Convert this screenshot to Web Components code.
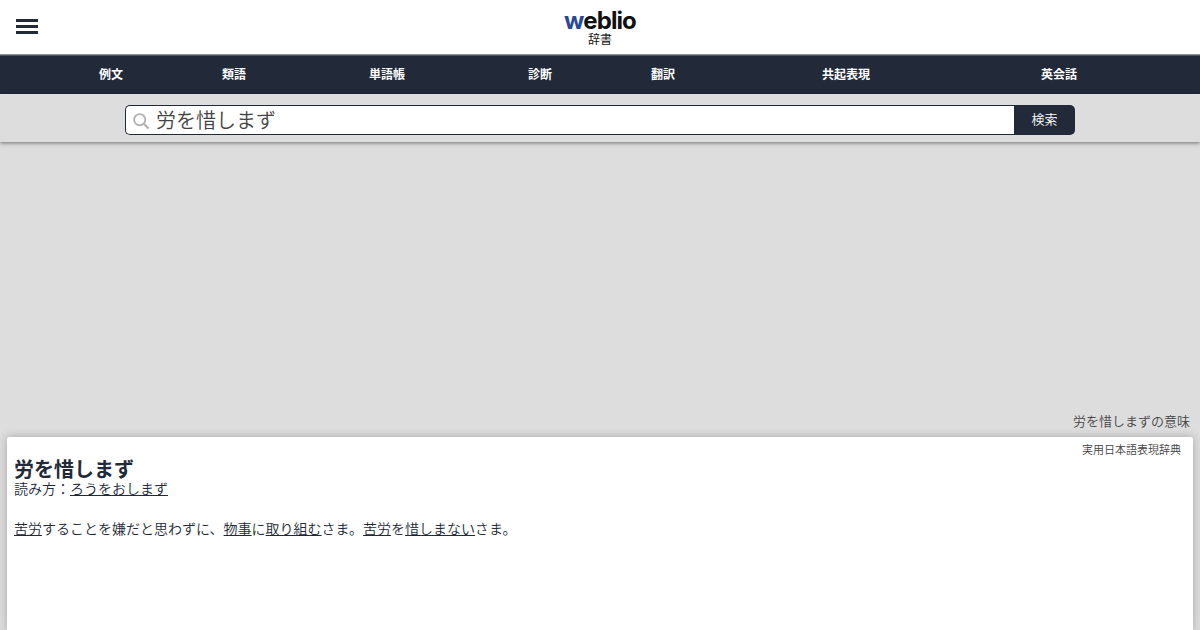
<!DOCTYPE html>
<html lang="ja">
<head>
<meta charset="utf-8">
<title>労を惜しまずの意味</title>
<style>
    body {
        margin: 0;
        height: 630px;
        overflow: hidden;
        display: flex;
        flex-direction: column;
        background: #ddd;
        color: #222939;
        font-family: "Liberation Sans", "Noto Sans CJK JP", sans-serif;
        font-weight: 350;
    }
</style>
</head>
<body>
<site-header></site-header>
<site-nav>
    <nav-item>例文</nav-item>
    <nav-item>類語</nav-item>
    <nav-item>単語帳</nav-item>
    <nav-item>診断</nav-item>
    <nav-item>翻訳</nav-item>
    <nav-item>共起表現</nav-item>
    <nav-item>英会話</nav-item>
</site-nav>
<search-bar word="労を惜しまず"></search-bar>
<page-caption>労を惜しまずの意味</page-caption>
<dict-entry>
    <span slot="source">実用日本語表現辞典</span>
    <span slot="title">労を惜しまず</span>
    <span slot="reading">読み方：<word-link>ろうをおしまず</word-link></span>
    <word-link>苦労</word-link>することを嫌だと思わずに、<word-link>物事</word-link>に<word-link>取り組む</word-link>さま。<word-link>苦労</word-link>を<word-link>惜しまない</word-link>さま。
</dict-entry>

<script>
function attach(el, html) {
    // trimmed, so that inline elements get no spaces around their slot
    el.attachShadow({ mode: 'open' }).innerHTML = html.trim();
}

class SiteHeader extends HTMLElement {
    constructor() {
        super();
        attach(this, `
            <style>
                :host {
                    flex: none;
                    display: grid;
                    grid-template-columns: 60px 1fr 60px;
                    height: 54px;
                    background: #fff;
                }
                .menu {
                    display: flex;
                    flex-direction: column;
                    gap: 3px;
                    width: 22px;
                    padding: 19px 0 0 16px;
                }
                .menu i {
                    height: 3px;
                    background: #222939;
                }
                .logo {
                    padding-top: 8px;
                    text-align: center;
                    color: #111;
                }
                .name {
                    font-family: Inter, "Liberation Sans", sans-serif;
                    font-size: 24px;
                    font-weight: 700;
                    line-height: 25px;
                    letter-spacing: -0.9px;
                }
                .name b {
                    font-weight: inherit;
                    color: #27489b;
                }
                .sub {
                    font-size: 12px;
                    font-weight: 400;
                    line-height: 14px;
                }
            </style>
            <div class="menu"><i></i><i></i><i></i></div>
            <div class="logo">
                <div class="name"><b>w</b>eblio</div>
                <div class="sub">辞書</div>
            </div>
        `);
    }
}

class SiteNav extends HTMLElement {
    constructor() {
        super();
        attach(this, `
            <style>
                :host {
                    flex: none;
                    box-sizing: border-box;
                    display: grid;
                    grid-template-columns: 123fr 123fr 183fr 123fr 123fr 243fr 183fr;
                    height: 40px;
                    padding: 0 49.5px;
                    background: linear-gradient(#8d9099 0, #8d9099 1px, #50545f 1px, #50545f 2px, #222939 2px);
                }
            </style>
            <slot></slot>
        `);
    }
}

class NavItem extends HTMLElement {
    constructor() {
        super();
        attach(this, `
            <style>
                :host {
                    display: block;
                    text-align: center;
                    font-size: 12px;
                    font-weight: bold;
                    line-height: 42px;
                    color: #fff;
                }
            </style>
            <slot></slot>
        `);
    }
}

class SearchBar extends HTMLElement {
    constructor() {
        super();
        attach(this, `
            <style>
                :host {
                    flex: none;
                    box-sizing: border-box;
                    display: flex;
                    justify-content: center;
                    height: 48px;
                    padding-top: 11px;
                    background: #ddd;
                    box-shadow: 0 1px 4px rgba(0, 0, 0, 0.5);
                }
                .field {
                    box-sizing: border-box;
                    display: flex;
                    align-items: center;
                    width: 889px;
                    height: 30px;
                    padding-left: 7px;
                    border: 1px solid #222939;
                    border-right: 0;
                    border-radius: 5px 0 0 5px;
                    background: #fff;
                    color: #444;
                    font-size: 20px;
                    line-height: 28px;
                }
                svg {
                    margin: 3px 6px 0 0;
                }
                .word {
                    padding-top: 2px;
                }
                .button {
                    width: 61px;
                    height: 30px;
                    border-radius: 0 5px 5px 0;
                    background: #222939;
                    color: #fff;
                    font-size: 13px;
                    line-height: 30px;
                    text-align: center;
                }
            </style>
            <div class="field">
                <svg width="17" height="17" viewBox="0 0 17 17" fill="none" stroke="#b3b3b3">
                    <circle cx="6.7" cy="6.7" r="5.6" stroke-width="1.9"/>
                    <path d="M10.8 10.8L15.5 15.5" stroke-width="2.3"/>
                </svg>
                <span class="word"></span>
            </div>
            <div class="button">検索</div>
        `);
        this.$word = this.shadowRoot.querySelector('.word');
    }

    static get observedAttributes() {
        return ['word'];
    }

    attributeChangedCallback(name, oldValue, newValue) {
        this.$word.textContent = newValue;
    }
}

class PageCaption extends HTMLElement {
    constructor() {
        super();
        attach(this, `
            <style>
                :host {
                    flex: none;
                    box-sizing: border-box;
                    display: flex;
                    align-items: flex-end;
                    justify-content: flex-end;
                    height: 295px;
                    padding: 0 10px 5px;
                    font-size: 13px;
                    line-height: 20px;
                    color: #444;
                }
            </style>
            <slot></slot>
        `);
    }
}

class DictEntry extends HTMLElement {
    constructor() {
        super();
        attach(this, `
            <style>
                :host {
                    flex: 1;
                    display: block;
                    margin: 0 7px;
                    padding: 0 7px;
                    border-radius: 2px 2px 0 0;
                    background: #fff;
                    box-shadow: 0 0 8px rgba(0, 0, 0, 0.25);
                    font-size: 14px;
                    line-height: 20px;
                }
                .source {
                    padding: 5px 5px 0 0;
                    font-size: 11px;
                    line-height: 16px;
                    text-align: right;
                    color: #444;
                }
                h2 {
                    margin: 0;
                    font-size: 20px;
                    line-height: 24px;
                }
                .reading {
                    margin-top: -3px;
                }
                .text {
                    margin-top: 20px;
                }
            </style>
            <div class="source"><slot name="source"></slot></div>
            <h2><slot name="title"></slot></h2>
            <div class="reading"><slot name="reading"></slot></div>
            <div class="text"><slot></slot></div>
        `);
    }
}

class WordLink extends HTMLElement {
    constructor() {
        super();
        attach(this, `
            <style>
                :host {
                    text-decoration: underline;
                    text-decoration-skip-ink: none;
                    cursor: pointer;
                }
            </style><slot></slot>
        `);
    }
}

customElements.define('site-header', SiteHeader);
customElements.define('site-nav', SiteNav);
customElements.define('nav-item', NavItem);
customElements.define('search-bar', SearchBar);
customElements.define('page-caption', PageCaption);
customElements.define('dict-entry', DictEntry);
customElements.define('word-link', WordLink);
</script>
</body>
</html>
